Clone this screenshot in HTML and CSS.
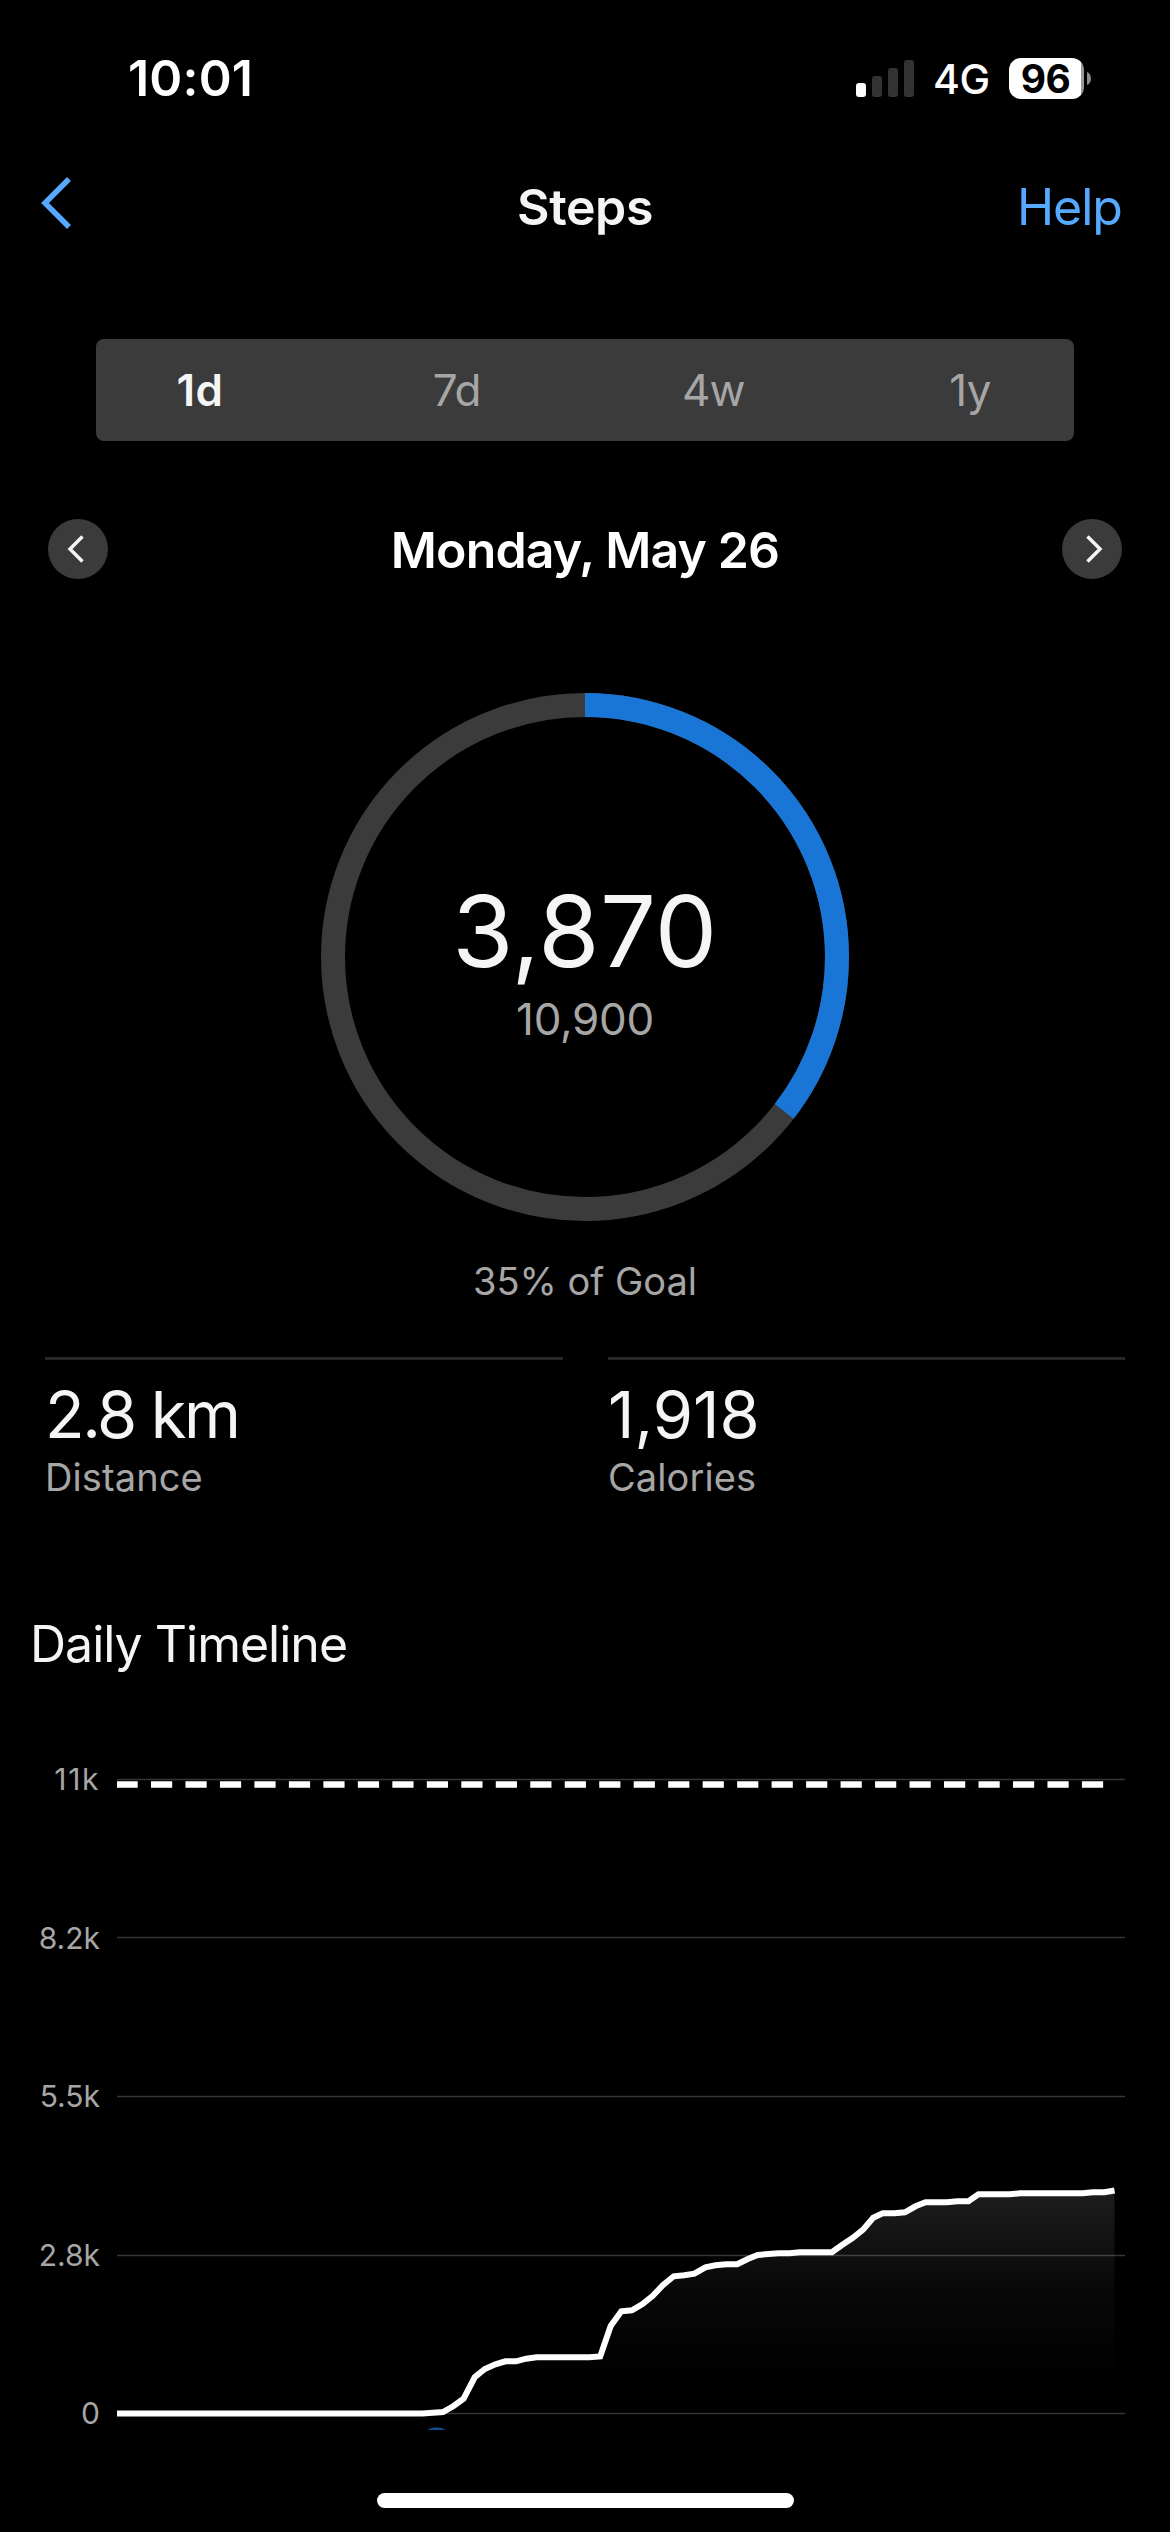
FILE: index.html
```html
<!DOCTYPE html>
<html lang="en">
<head>
    <meta charset="UTF-8">
    <meta name="viewport" content="width=device-width, initial-scale=1.0">
    <title>Steps</title>
    <link rel="stylesheet" href="styles.css">
</head>
<body>
    <div class="screen">
        <div class="status-bar">
            <span class="time">10:01</span>
            <div class="status-icons">
                <svg class="signal" viewBox="0 0 58 37">
                    <rect class="on" x="0" y="23" width="10" height="14" rx="3"/>
                    <rect x="16" y="16" width="10" height="21" rx="3"/>
                    <rect x="32" y="8" width="10" height="29" rx="3"/>
                    <rect x="48" y="0" width="10" height="37" rx="3"/>
                </svg>
                <span class="network">4G</span>
                <div class="battery"><span>96</span></div>
                <svg class="battery-tip" viewBox="0 0 4 13">
                    <path d="M0 0C5.3 2 5.3 11 0 13Z"/>
                </svg>
            </div>
        </div>

        <header class="nav">
            <a href="#" class="back">
                <svg viewBox="0 0 30 52">
                    <path d="M28 2L4 26L28 50"/>
                </svg>
            </a>
            <h1>Steps</h1>
            <a href="#" class="help">Help</a>
        </header>

        <div class="tabs">
            <button class="tab active">1d</button>
            <button class="tab">7d</button>
            <button class="tab">4w</button>
            <button class="tab">1y</button>
        </div>

        <div class="date-nav">
            <button class="arrow">
                <svg viewBox="0 0 60 60"><path d="M34.5 17.5L22 30L34.5 42.5"/></svg>
            </button>
            <h2>Monday, May 26</h2>
            <button class="arrow">
                <svg viewBox="0 0 60 60"><path d="M25.5 17.5L38 30L25.5 42.5"/></svg>
            </button>
        </div>

        <div class="ring">
            <svg viewBox="0 0 528 528">
                <circle class="track" cx="264" cy="264" r="252"/>
                <circle class="progress" cx="264" cy="264" r="252" pathLength="1000" stroke-dasharray="355 1000" transform="rotate(-90 264 264)"/>
            </svg>
            <div class="ring-text">
                <div class="steps">3,870</div>
                <div class="goal">10,900</div>
            </div>
        </div>
        <p class="percent">35% of Goal</p>

        <div class="stats">
            <div class="stat">
                <div class="value distance">2.8 km</div>
                <div class="label">Distance</div>
            </div>
            <div class="stat">
                <div class="value">1,918</div>
                <div class="label">Calories</div>
            </div>
        </div>

        <h3>Daily Timeline</h3>

        <div class="chart">
            <div class="y-axis">
                <span class="top">11k</span>
                <span>8.2k</span>
                <span>5.5k</span>
                <span>2.8k</span>
                <span>0</span>
            </div>
            <svg class="plot" viewBox="117 1761 1008 669">
                <defs>
                    <linearGradient id="fade" gradientUnits="userSpaceOnUse" x1="0" y1="2190" x2="0" y2="2390">
                        <stop offset="0" stop-color="#fff" stop-opacity="0.115"/>
                        <stop offset="0.5" stop-color="#fff" stop-opacity="0.03"/>
                        <stop offset="1" stop-color="#fff" stop-opacity="0"/>
                    </linearGradient>
                </defs>
                <path class="grid" d="M117 1779.5H1125M117 1937.5H1125M117 2096.5H1125M117 2255.5H1125M117 2413.5H1125"/>
                <path class="target" d="M117 1784.5H1106"/>
                <path class="area" d="M422.3 2413.5L443 2412L453.6 2406L463.6 2398.7L474.7 2377.3L484.8 2369L495.4 2364.3L505.4 2361.3L516 2361.3L526.1 2358.7L536.7 2357.3L589.1 2357.3L600.2 2356.5L610.7 2326L621.3 2311.3L631.9 2310.3L642.5 2304L652.5 2296L663.1 2285L673.7 2276.3L684.3 2275.3L694.4 2273.7L705.4 2267.3L715.5 2265.3L726.1 2264.3L737.2 2264.3L747.8 2259L757.8 2255L768.4 2254L778.5 2253.3L789.6 2253.3L799.6 2252.3L831.9 2252.3L842 2245L852.5 2238L863.1 2229.7L873.2 2217.7L882.8 2213.3L894.4 2213.3L904.9 2212.3L915.5 2206.3L925.6 2202.3L946.8 2202.3L957.3 2201.3L968.4 2201.3L978.5 2194.3L1009.7 2194.3L1019.8 2193.3L1082.8 2193.3L1092.8 2192.3L1104.4 2192.3L1114.5 2190.5V2413.5Z"/>
                <polyline class="line" points="117,2413.5 422.3,2413.5 432.9,2412.8 443,2412 453.6,2406 463.6,2398.7 474.7,2377.3 484.8,2369 495.4,2364.3 505.4,2361.3 516,2361.3 526.1,2358.7 536.7,2357.3 589.1,2357.3 600.2,2356.5 610.7,2326 621.3,2311.3 631.9,2310.3 642.5,2304 652.5,2296 663.1,2285 673.7,2276.3 684.3,2275.3 694.4,2273.7 705.4,2267.3 715.5,2265.3 726.1,2264.3 737.2,2264.3 747.8,2259 757.8,2255 768.4,2254 778.5,2253.3 789.6,2253.3 799.6,2252.3 831.9,2252.3 842,2245 852.5,2238 863.1,2229.7 873.2,2217.7 882.8,2213.3 894.4,2213.3 904.9,2212.3 915.5,2206.3 925.6,2202.3 946.8,2202.3 957.3,2201.3 968.4,2201.3 978.5,2194.3 1009.7,2194.3 1019.8,2193.3 1082.8,2193.3 1092.8,2192.3 1104.4,2192.3 1114.5,2190.5"/>
                <circle class="marker" cx="436.5" cy="2446.5" r="19"/>
            </svg>
        </div>

        <div class="home-indicator"></div>
    </div>
</body>
</html>
```
FILE: styles.css
```css
* {
    margin: 0;
    padding: 0;
    box-sizing: border-box;
}

body {
    font-family: Inter, 'Liberation Sans', sans-serif;
    background: #000;
    color: #f5f5f5;
}

svg {
    display: block;
}

a {
    text-decoration: none;
}

button {
    border: none;
    background: none;
    font-family: inherit;
}

.screen {
    width: 1170px;
    height: 2532px;
    overflow: hidden;
    display: flex;
    flex-direction: column;
}

/* Status bar */
.status-bar {
    height: 156px;
    padding: 0 79px 0 128px;
    display: flex;
    align-items: center;
    justify-content: space-between;
    color: #fff;
}

.time {
    font-size: 50px;
    font-weight: 600;
    letter-spacing: 0.2px;
}

.status-icons {
    display: flex;
    align-items: center;
}

.signal {
    width: 58px;
    height: 37px;
    margin-right: 19px;
    fill: #333;
}

.signal .on {
    fill: #fff;
}

.network {
    width: 58px;
    margin-right: 18px;
    font-size: 41px;
    font-weight: 500;
    line-height: 50px;
    letter-spacing: -0.5px;
    padding-top: 2px;
}

.battery {
    width: 75px;
    height: 41px;
    border-radius: 12px;
    background: linear-gradient(to right, #fff 72px, #999 72px);
    color: #000;
    font-size: 39px;
    font-weight: 700;
    line-height: 41px;
    text-align: center;
    letter-spacing: -0.5px;
    padding-right: 2px;
}

.battery-tip {
    width: 4px;
    height: 13px;
    margin-left: 3px;
    fill: #8c8c8c;
}

/* Navigation */
.nav {
    height: 102px;
    padding: 0 48px 0 41px;
    display: grid;
    grid-template-columns: 200px 1fr 200px;
    align-items: center;
}

.back svg {
    width: 30px;
    height: 52px;
    margin-bottom: 8px;
    fill: none;
    stroke: #55aaff;
    stroke-width: 5.5;
}

h1 {
    font-size: 50px;
    font-weight: 600;
    text-align: center;
    letter-spacing: -0.4px;
    padding-left: 7px;
}

.help {
    color: #55aaff;
    font-size: 50px;
    text-align: right;
    letter-spacing: -1px;
}

/* Range tabs */
.tabs {
    height: 102px;
    margin: 81px 96px 0;
    padding: 0 44px;
    display: flex;
    justify-content: space-between;
    background: #3b3b3b;
    border-radius: 8px;
}

.tab {
    width: 120px;
    color: #a6a6a6;
    font-size: 44px;
    letter-spacing: -0.8px;
}

.tab.active {
    color: #f5f5f5;
    font-weight: 600;
    letter-spacing: 0.5px;
}

/* Date */
.date-nav {
    margin: 78px 48px 0;
    height: 60px;
    display: flex;
    align-items: center;
    justify-content: space-between;
}

.arrow {
    width: 60px;
    height: 60px;
    border-radius: 50%;
    background: #3b3b3b;
}

.arrow path {
    fill: none;
    stroke: #f5f5f5;
    stroke-width: 3.5;
}

h2 {
    color: #fff;
    font-size: 50px;
    font-weight: 600;
    line-height: 60px;
    letter-spacing: -0.85px;
    padding-top: 2px;
}

/* Progress ring */
.ring {
    width: 528px;
    height: 528px;
    margin: 114px auto 0;
    display: grid;
}

.ring > * {
    grid-area: 1 / 1;
}

.ring circle {
    fill: none;
    stroke-width: 24;
}

.track {
    stroke: #3b3b3b;
}

.progress {
    stroke: #1976d6;
}

.ring-text {
    padding-top: 188px;
    text-align: center;
}

.steps {
    font-size: 99px;
    line-height: 100px;
    letter-spacing: 0.4px;
}

.goal {
    margin-top: 8px;
    color: #a6a6a6;
    font-size: 44px;
    line-height: 60px;
    letter-spacing: -0.3px;
}

.percent {
    margin-top: 36px;
    color: #a6a6a6;
    font-size: 38px;
    line-height: 48px;
    letter-spacing: 0;
    text-align: center;
}

/* Stats */
.stats {
    margin: 52px 45px 0;
    display: grid;
    grid-template-columns: 518px 517px;
    gap: 45px;
}

.stat {
    border-top: 3px solid #262626;
    padding-top: 20px;
}

.value {
    font-size: 65px;
    line-height: 70px;
}

.distance {
    letter-spacing: -2.4px;
}

.label {
    margin-top: 3px;
    color: #a6a6a6;
    font-size: 38px;
    line-height: 48px;
    letter-spacing: 0.1px;
}

/* Timeline */
h3 {
    margin: 113px 0 0 30px;
    font-size: 50px;
    font-weight: 400;
    line-height: 60px;
    letter-spacing: -1px;
}

.chart {
    margin-top: 87px;
    display: flex;
}

.y-axis {
    width: 100px;
    height: 670px;
    margin-right: 17px;
    display: flex;
    flex-direction: column;
    justify-content: space-between;
    text-align: right;
    color: #a6a6a6;
    font-size: 30px;
    line-height: 36px;
}

.y-axis .top {
    letter-spacing: 1.6px;
}

.plot {
    width: 1008px;
    height: 669px;
    overflow: hidden;
}

.grid {
    stroke: #363636;
    stroke-width: 1.5;
}

.target {
    stroke: #fff;
    stroke-width: 6.5;
    stroke-dasharray: 21.2 13.28;
    stroke-dashoffset: 0.5;
}

.area {
    fill: url(#fade);
}

.line {
    fill: none;
    stroke: #fff;
    stroke-width: 6;
}

.marker {
    fill: #0f4c94;
}

.home-indicator {
    width: 417px;
    height: 15px;
    margin: 62px auto 0;
    flex-shrink: 0;
    border-radius: 8px;
    background: #fff;
}
```
